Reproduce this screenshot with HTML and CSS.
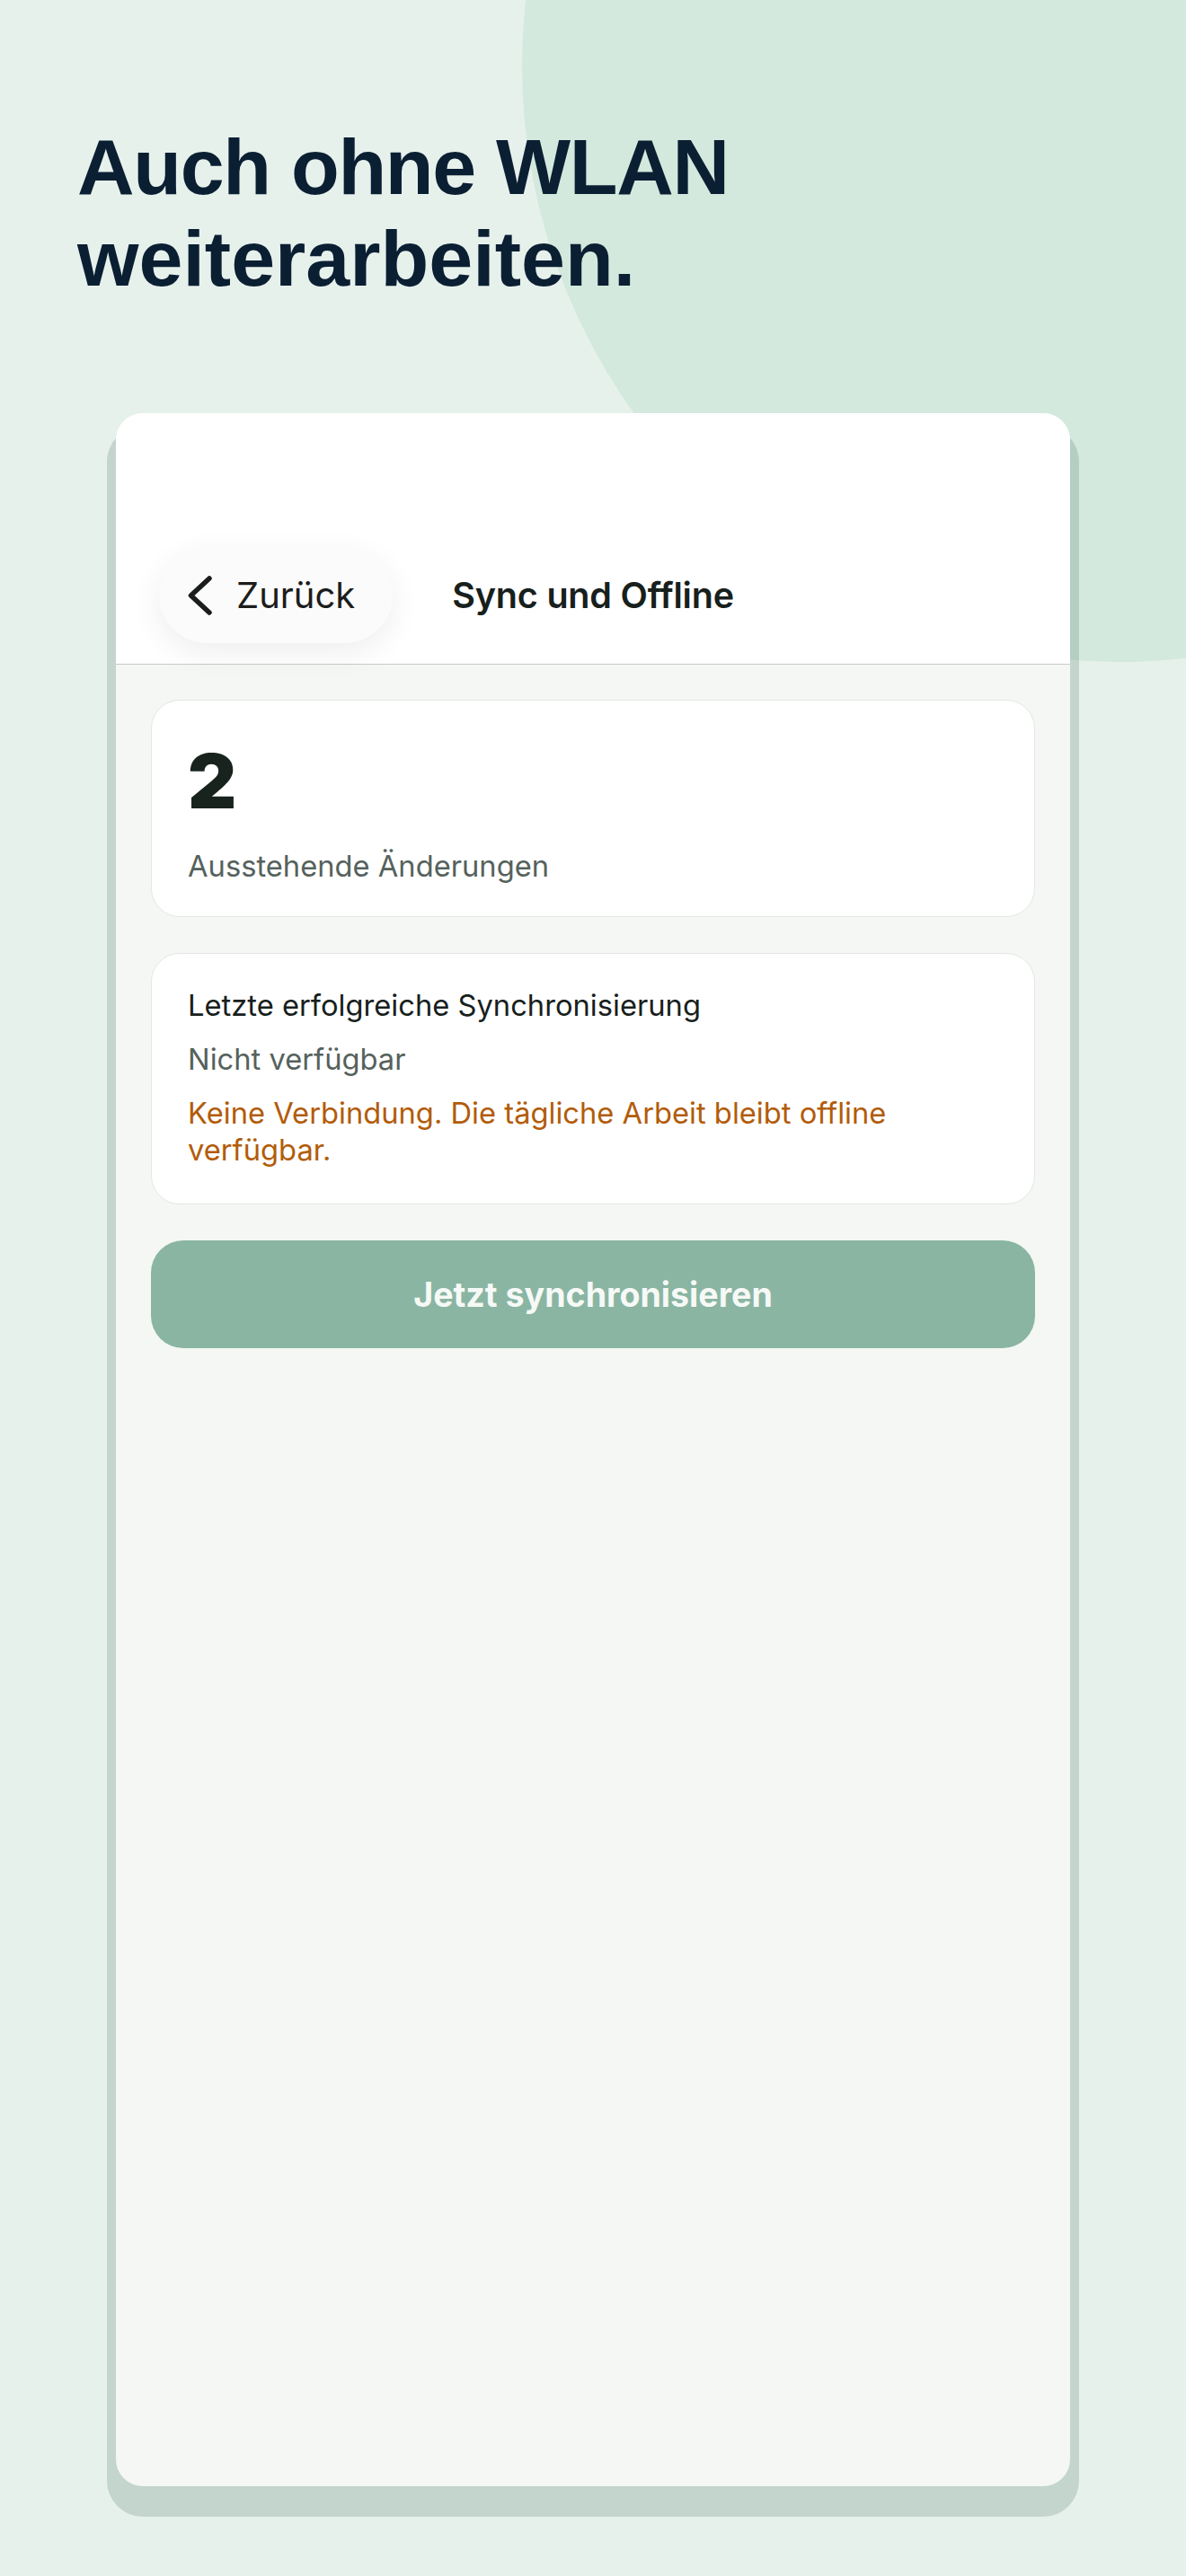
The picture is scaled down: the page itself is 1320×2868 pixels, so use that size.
FILE: index.html
```html
<!DOCTYPE html>
<html lang="de">
<head>
<meta charset="utf-8">
<title>Sync und Offline</title>
<link rel="stylesheet" href="styles.css">
</head>
<body>
<div class="page">
  <div class="blob"></div>
  <h1 class="headline"><span class="hl-1">Auch ohne WLAN</span><span class="hl-2">weiterarbeiten.</span></h1>
  <div class="device">
    <header class="topbar">
      <button class="back" type="button">
        <svg class="chev" width="28" height="44" viewBox="0 0 28 44" aria-hidden="true">
          <path d="M24 3 L3.5 22 L24 41" fill="none" stroke="#1b1d1c" stroke-width="5.5" stroke-linecap="round" stroke-linejoin="round"/>
        </svg>
        <span>Zurück</span>
      </button>
      <div class="title">Sync und Offline</div>
    </header>
    <main class="content">
      <section class="card card-count">
        <div class="count">2</div>
        <div class="muted">Ausstehende Änderungen</div>
      </section>
      <section class="card card-sync">
        <div class="label">Letzte erfolgreiche Synchronisierung</div>
        <div class="muted">Nicht verfügbar</div>
        <div class="warn">Keine Verbindung. Die tägliche Arbeit bleibt offline verfügbar.</div>
      </section>
      <button class="sync" type="button">Jetzt synchronisieren</button>
    </main>
  </div>
</div>
</body>
</html>
```

FILE: styles.css
```css
html, body {
  margin: 0;
  padding: 0;
}
body {
  background: #e7f1ec;
  font-family: Inter, "Noto Sans", sans-serif;
}
.page {
  position: relative;
  width: 1320px;
  height: 2868px;
  overflow: hidden;
  background: #e7f1ec;
}
.blob {
  position: absolute;
  left: 581px;
  top: -591px;
  width: 1328px;
  height: 1328px;
  border-radius: 50%;
  background: #d3e9dd;
}
.headline {
  position: relative;
  margin: 0;
  padding: 135px 0 0 86px;
  height: 460px;
  box-sizing: border-box;
  font-family: "Liberation Sans", Arial, sans-serif;
  font-weight: 700;
  font-size: 88px;
  line-height: 102px;
  color: #0b1f33;
}
.hl-1,
.hl-2 {
  display: block;
}
.hl-1 {
  letter-spacing: -1.3px;
}
.hl-2 {
  letter-spacing: 0;
}
.device {
  position: relative;
  margin: 0 auto;
  width: 1062px;
  height: 2308px;
  border-radius: 30px;
  background: #f4f7f3;
  box-shadow: 0 24px 0 10px rgba(60, 106, 85, 0.2);
  overflow: hidden;
  display: flex;
  flex-direction: column;
}
.topbar {
  background: #ffffff;
  height: 280px;
  box-sizing: border-box;
  padding: 149px 0 0 48px;
  border-bottom: 1px solid #c8cbc8;
  display: flex;
  align-items: flex-start;
  gap: 66px;
}
.back {
  display: inline-flex;
  align-items: center;
  gap: 26px;
  height: 107px;
  padding: 0 42px 0 32px;
  border: none;
  border-radius: 54px;
  background: #fbfbfb;
  box-shadow: 0 10px 34px rgba(0, 0, 0, 0.07);
  font-family: Inter, "Noto Sans", sans-serif;
  font-size: 40px;
  font-weight: 400;
  color: #1b1d1c;
  cursor: pointer;
}
.chev {
  display: block;
  flex: none;
}
.title {
  height: 107px;
  display: flex;
  align-items: center;
  font-size: 39.5px;
  font-weight: 600;
  letter-spacing: -0.2px;
  color: #17201c;
}
.content {
  padding: 39px 39px 0;
  display: flex;
  flex-direction: column;
  gap: 40px;
}
.card {
  background: #ffffff;
  border: 1px solid #e3e8e4;
  border-radius: 32px;
  padding: 40px 40px 35px;
  display: flex;
  flex-direction: column;
}
.count {
  font-size: 84px;
  font-weight: 900;
  line-height: 100px;
  color: #18231e;
}
.card-count .muted {
  margin-top: 24px;
}
.muted {
  font-size: 32.7px;
  line-height: 41px;
  color: #55625c;
}
.card-sync {
  padding: 37px 40px 39px;
  gap: 19px;
}
.label {
  font-size: 32.7px;
  line-height: 41px;
  color: #17201c;
}
.warn {
  font-size: 32.7px;
  line-height: 41px;
  color: #b25c0a;
}
.sync {
  height: 120px;
  border: none;
  border-radius: 36px;
  background: #8ab5a3;
  color: #f6f9f6;
  font-family: Inter, "Noto Sans", sans-serif;
  font-size: 37.6px;
  font-weight: 700;
  cursor: pointer;
}
```
